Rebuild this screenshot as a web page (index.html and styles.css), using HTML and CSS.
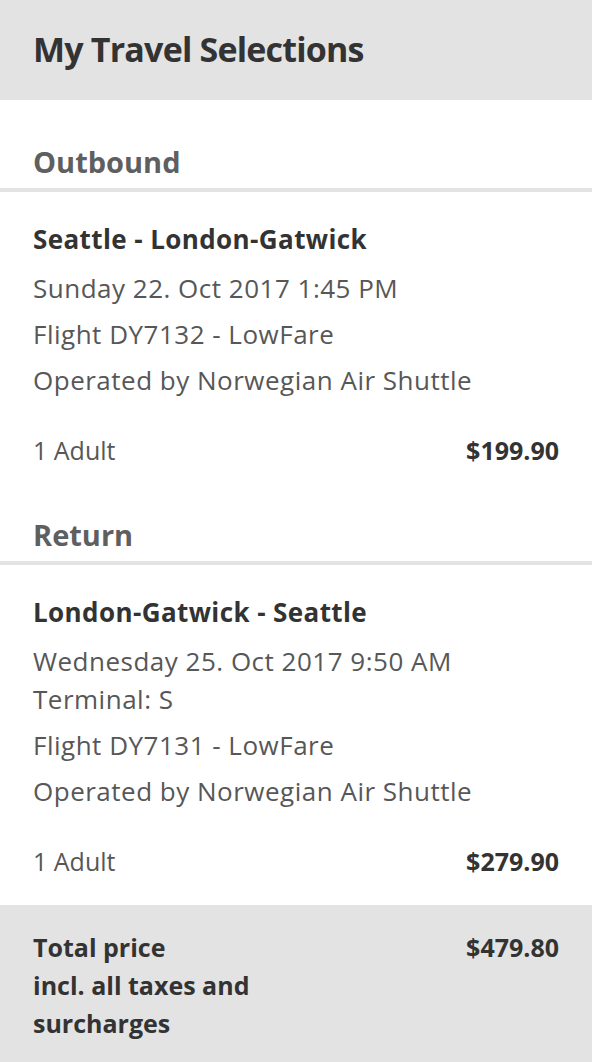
FILE: index.html
```html
<!DOCTYPE html>
<html lang="en">
<head>
<meta charset="utf-8">
<title>My Travel Selections</title>
<link rel="stylesheet" href="styles.css">
</head>
<body>
<div class="panel">
  <header class="panel-header">
    <h1 class="panel-title">My Travel Selections</h1>
  </header>

  <section class="leg">
    <h2 class="leg-title">Outbound</h2>
    <div class="leg-body">
      <p class="route">Seattle - London-Gatwick</p>
      <p class="info">Sunday 22. Oct 2017 1:45 PM</p>
      <p class="info">Flight DY7132 - LowFare</p>
      <p class="info">Operated by Norwegian Air Shuttle</p>
      <div class="price-row">
        <span class="pax">1 Adult</span>
        <span class="price">$199.90</span>
      </div>
    </div>
  </section>

  <section class="leg">
    <h2 class="leg-title">Return</h2>
    <div class="leg-body">
      <p class="route">London-Gatwick - Seattle</p>
      <p class="info">Wednesday 25. Oct 2017 9:50 AM<br>Terminal: S</p>
      <p class="info">Flight DY7131 - LowFare</p>
      <p class="info">Operated by Norwegian Air Shuttle</p>
      <div class="price-row">
        <span class="pax">1 Adult</span>
        <span class="price">$279.90</span>
      </div>
    </div>
  </section>

  <footer class="total">
    <div class="total-label">
      <span class="total-line">Total price</span>
      <span class="total-line">incl. all taxes and surcharges</span>
    </div>
    <span class="total-price">$479.80</span>
  </footer>
</div>
</body>
</html>
```

FILE: styles.css
```css
html, body {
  margin: 0;
  padding: 0;
  background: #ffffff;
}

body {
  font-family: "Open Sans", Lato, Arial, sans-serif;
  color: #575757;
}

.panel {
  width: 592px;
  min-height: 1062px;
  display: flex;
  flex-direction: column;
}

.panel-header {
  background: #e3e3e3;
  height: 100px;
  padding: 27px 33px 0;
  box-sizing: border-box;
}

.panel-title {
  margin: 0;
  font-size: 34px;
  font-weight: 700;
  line-height: 44px;
  letter-spacing: -0.8px;
  color: #333333;
}

.leg {
  padding-top: 43px;
}

.leg + .leg {
  padding-top: 47px;
}

.leg-title {
  margin: 0;
  padding: 0 33px 7px;
  font-size: 29px;
  font-weight: 700;
  line-height: 38px;
  color: #5f5f5f;
  border-bottom: 4px solid #e3e3e3;
}

.leg-body {
  padding: 28px 33px 0;
}

.route {
  margin: 0 0 11px;
  font-size: 26px;
  font-weight: 700;
  line-height: 38px;
  letter-spacing: 0.4px;
  color: #333333;
}

.info {
  margin: 0 0 8px;
  font-size: 26px;
  line-height: 38px;
  letter-spacing: 0.5px;
  color: #575757;
}

.price-row {
  display: flex;
  justify-content: space-between;
  align-items: baseline;
  padding-top: 24px;
  font-size: 25px;
  line-height: 38px;
}

.pax {
  color: #575757;
}

.price {
  font-weight: 700;
  color: #333333;
}

.total {
  margin-top: 25px;
  flex: 1;
  background: #e3e3e3;
  padding: 23px 33px 20px;
  display: flex;
  justify-content: space-between;
  align-items: flex-start;
  font-size: 25px;
  font-weight: 700;
  line-height: 38px;
  color: #333333;
}

.total-label {
  width: 260px;
}

.total-line {
  display: block;
}
```
